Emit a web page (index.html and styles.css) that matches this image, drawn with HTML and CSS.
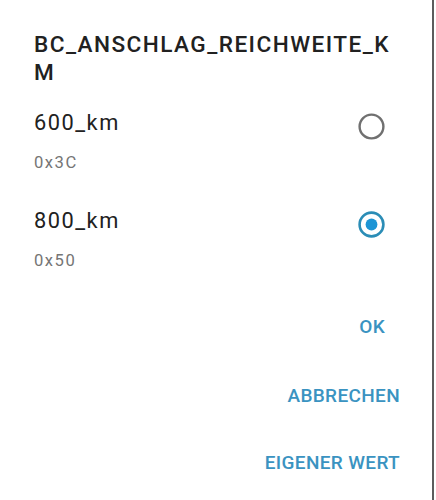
FILE: index.html
```html
<!DOCTYPE html>
<html lang="de">
<head>
<meta charset="utf-8">
<title>BC_ANSCHLAG_REICHWEITE_KM</title>
<link rel="stylesheet" href="styles.css">
</head>
<body>
<div class="dialog">
  <h1 class="title">BC_ANSCHLAG_REICHWEITE_KM</h1>
  <div class="options">
    <div class="option">
      <div class="option-text">
        <div class="option-label">600_km</div>
        <div class="option-sub">0x3C</div>
      </div>
      <svg class="radio" width="27" height="27" viewBox="0 0 27 27">
        <circle cx="13.5" cy="13.5" r="11.9" fill="none" stroke="#707070" stroke-width="2.4"/>
      </svg>
    </div>
    <div class="option option-next">
      <div class="option-text">
        <div class="option-label">800_km</div>
        <div class="option-sub">0x50</div>
      </div>
      <svg class="radio" width="27" height="27" viewBox="0 0 27 27">
        <circle cx="13.5" cy="13.5" r="11.9" fill="none" stroke="#2b8db6" stroke-width="2.6"/>
        <circle cx="13.5" cy="13.5" r="5.9" fill="#1d95d5"/>
      </svg>
    </div>
  </div>
  <div class="actions">
    <div class="btn btn-ok">OK</div>
    <div class="btn btn-cancel">ABBRECHEN</div>
    <div class="btn btn-custom">EIGENER WERT</div>
  </div>
</div>
</body>
</html>
```

FILE: styles.css
```css
html, body {
  margin: 0;
  padding: 0;
  background: #ffffff;
}

body {
  font-family: Roboto, "Liberation Sans", Arial, sans-serif;
  color: #212121;
}

.dialog {
  box-sizing: border-box;
  width: 434px;
  min-height: 500px;
  padding: 31px 34px 0 34px;
  border-right: 2px solid #5c5c5c;
  background: #ffffff;
}

.title {
  margin: 0;
  width: 366px;
  font-size: 22.6px;
  font-weight: 500;
  letter-spacing: 1.45px;
  line-height: 28px;
  color: #212121;
  word-break: break-all;
}

.options {
  margin-top: 22px;
  width: 366px;
}

.option {
  display: flex;
  justify-content: space-between;
  align-items: flex-start;
}

.option-next {
  margin-top: 33px;
}

.option-label {
  font-size: 21.8px;
  letter-spacing: 1.5px;
  line-height: 28px;
  color: #212121;
}

.option-sub {
  margin-top: 15px;
  font-size: 16.6px;
  letter-spacing: 1.5px;
  line-height: 22px;
  color: #757575;
}

.radio {
  display: block;
  margin-top: 4px;
  margin-right: 15px;
  flex: none;
}

.actions {
  width: 366px;
  margin-top: 43px;
  display: flex;
  flex-direction: column;
  align-items: flex-end;
}

.btn {
  font-size: 19px;
  font-weight: 500;
  letter-spacing: 0.35px;
  line-height: 24px;
  color: #3a93c1;
  text-transform: uppercase;
}

.btn-ok {
  margin-right: 15px;
}

.btn-cancel {
  margin-top: 45px;
}

.btn-custom {
  margin-top: 43px;
}
```
